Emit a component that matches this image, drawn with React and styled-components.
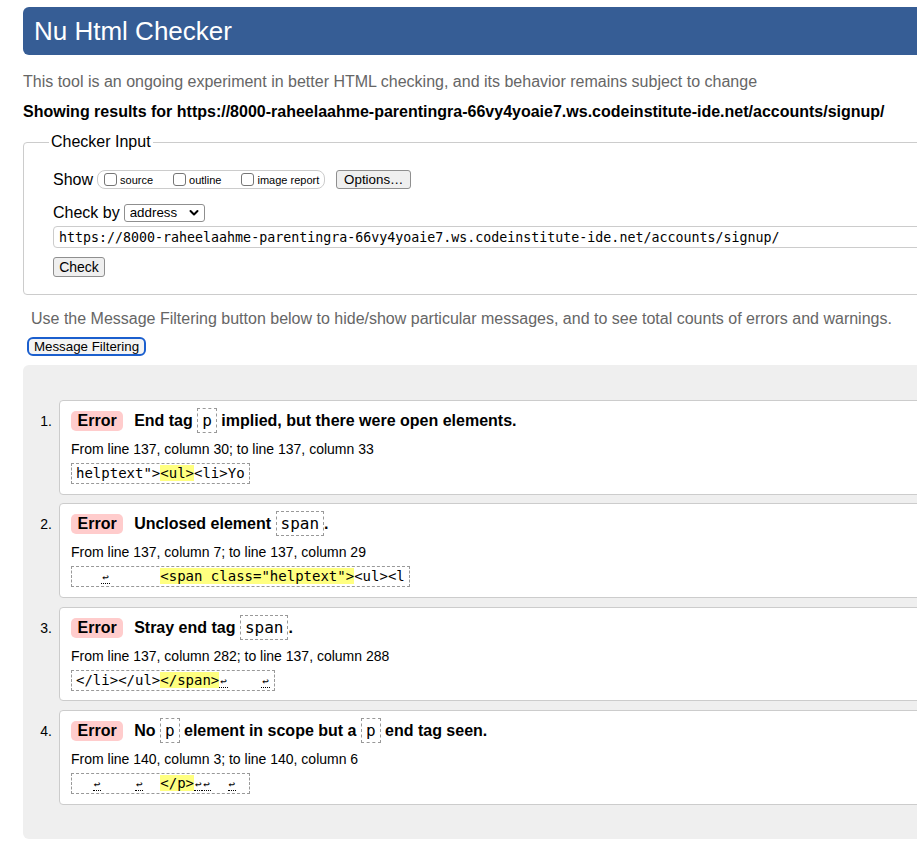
import React from 'react';
import styled, { createGlobalStyle } from 'styled-components';

const GlobalStyle = createGlobalStyle`
  html, body {
    margin: 0;
    padding: 0;
    overflow: hidden;
    background: #fff;
  }
  body {
    font-family: "Liberation Sans", Arial, sans-serif;
    color: #000;
  }
`;

const mono = `"DejaVu Sans Mono", "Liberation Mono", monospace`;

const Page = styled.div`
  width: 1000px;
  padding: 7px 0 0 23px;
`;

const Header = styled.h1`
  margin: 0;
  height: 48px;
  line-height: 48px;
  padding-left: 11px;
  background: #365d95;
  color: #fff;
  font-size: 26px;
  font-weight: normal;
  border-radius: 6px;
`;

const Intro = styled.p`
  margin: 18px 0 0;
  font-size: 16px;
  line-height: 18px;
  color: #666;
`;

const Results = styled.p`
  margin: 12px 0 0;
  font-size: 16px;
  line-height: 18px;
  font-weight: bold;
`;

const Fieldset = styled.fieldset`
  margin: 12px 0 0;
  padding: 19px 0 17px 29px;
  border: 1px solid #ccc;
  border-radius: 4px;
  min-width: 0;
`;

const Legend = styled.legend`
  padding: 0 2px;
  margin-left: -4px;
  font-size: 16px;
  line-height: 18px;
`;

const Row = styled.div`
  display: flex;
  align-items: center;
  gap: 4px;
  height: 19px;
  margin-top: ${p => p.$top || 0}px;
  font-size: 16px;
`;

const Toggles = styled.div`
  display: flex;
  align-items: center;
  gap: 20px;
  height: 19px;
  box-sizing: border-box;
  border: 1px solid #ccc;
  border-radius: 8px;
  padding: 0 5px 0 6px;
`;

const Toggle = styled.label`
  display: flex;
  align-items: center;
  gap: 3px;
  font-size: 11px;
`;

const Box = styled.input`
  appearance: none;
  margin: 0;
  width: 13px;
  height: 13px;
  border: 1px solid #767676;
  border-radius: 3px;
  background: #fff;
`;

const Button = styled.button`
  box-sizing: border-box;
  width: ${p => p.$width}px;
  height: 19px;
  margin-left: ${p => p.$left || 0}px;
  padding: 0;
  font-family: "Liberation Sans", Arial, sans-serif;
  font-size: 13.33px;
  color: #000;
  background: #efefef;
  border: 1px solid #8f8f8f;
  border-radius: 3px;
`;

const SelectWrap = styled.div`
  position: relative;
  display: flex;
`;

const Select = styled.select`
  appearance: none;
  box-sizing: border-box;
  width: 81px;
  height: 18px;
  padding: 0 0 0 5px;
  font-family: "Liberation Sans", Arial, sans-serif;
  font-size: 13.33px;
  color: #000;
  background: #fff;
  border: 1px solid #8f8f8f;
  border-radius: 3px;
`;

const Chevron = styled.svg`
  position: absolute;
  right: 6px;
  top: 4px;
  width: 10px;
  height: 10px;
  pointer-events: none;
`;

const UrlInput = styled.input`
  display: block;
  box-sizing: border-box;
  width: 100%;
  height: 22px;
  margin: 4px 0 0;
  padding: 0 0 0 5px;
  font-family: ${mono};
  font-size: 13.3px;
  color: #000;
  border: 1px solid #ccc;
  border-radius: 4px;
`;

const CheckButton = styled(Button)`
  display: block;
  width: 52px;
  height: 20px;
  margin-top: 9px;
  font-size: 14px;
`;

const FilterNote = styled.p`
  margin: 15px 0 0;
  padding-left: 8px;
  font-size: 16px;
  line-height: 18px;
  color: #666;
`;

const FilterButton = styled.button`
  display: block;
  box-sizing: border-box;
  width: 119px;
  height: 19px;
  margin: 9px 0 0 4px;
  padding: 0;
  font-family: "Liberation Sans", Arial, sans-serif;
  font-size: 13.33px;
  color: #000;
  background: #f4f4f4;
  border: 2px solid #1b5fce;
  border-radius: 6px;
`;

const ResultsArea = styled.ol`
  list-style: none;
  margin: 9px 0 0;
  padding: 35px 0 34px;
  background: #efefef;
  border-radius: 6px;
  display: flex;
  flex-direction: column;
  gap: 8.8px;
`;

const Item = styled.li`
  display: flex;
`;

const Num = styled.span`
  flex: 0 0 36px;
  box-sizing: border-box;
  padding: 12px 7px 0 0;
  text-align: right;
  font-size: 14px;
  line-height: 18px;
`;

const Message = styled.div`
  flex: 1;
  background: #fff;
  border: 1px solid #ccc;
  border-radius: 4px;
  padding: 7px 11px 9.6px;
`;

const Title = styled.p`
  margin: 0;
  font-size: 16px;
  line-height: 26px;
  font-weight: bold;
`;

const Badge = styled.span`
  display: inline-block;
  height: 20px;
  line-height: 20px;
  padding: 0 6.5px;
  margin-right: 11px;
  background: #fcc;
  border-radius: 5px;
`;

const Code = styled.code`
  display: inline-block;
  padding: 0 4px;
  line-height: 23px;
  font-family: ${mono};
  font-size: 16px;
  font-weight: normal;
  border: 1px dashed #999;
`;

const Location = styled.p`
  margin: 6px 0 0;
  font-size: 14px;
  line-height: 18px;
`;

const Extract = styled.code`
  display: inline-block;
  margin-top: 5px;
  padding: 0 4px;
  font-family: ${mono};
  font-size: 14px;
  line-height: 19px;
  white-space: pre;
  border: 1px dashed #999;
`;

const Mark = styled.mark`
  background: #ffff80;
  color: #000;
`;

const Ret = styled.span`
  display: inline-block;
  width: 8.43px;
  text-align: center;
  font-size: 11px;
  line-height: 11px;
  border-bottom: 1px dotted #000;
`;

const messages = [
  {
    title: <>End tag <Code>p</Code> implied, but there were open elements.</>,
    loc: 'From line 137, column 30; to line 137, column 33',
    extract: <>{'helptext">'}<Mark>{'<ul>'}</Mark>{'<li>Yo'}</>,
  },
  {
    title: <>Unclosed element <Code>span</Code>.</>,
    loc: 'From line 137, column 7; to line 137, column 29',
    extract: <>{'   '}<Ret>↩</Ret>{'      '}<Mark>{'<span class="helptext">'}</Mark>{'<ul><l'}</>,
  },
  {
    title: <>Stray end tag <Code>span</Code>.</>,
    loc: 'From line 137, column 282; to line 137, column 288',
    extract: <>{'</li></ul>'}<Mark>{'</span>'}</Mark><Ret>↩</Ret>{'    '}<Ret>↩</Ret></>,
  },
  {
    title: <>No <Code>p</Code> element in scope but a <Code>p</Code> end tag seen.</>,
    loc: 'From line 140, column 3; to line 140, column 6',
    extract: <>{'  '}<Ret>↩</Ret>{'    '}<Ret>↩</Ret>{'  '}<Mark>{'</p>'}</Mark><Ret>↩</Ret><Ret>↩</Ret>{'  '}<Ret>↩</Ret>{' '}</>,
  },
];

const App = () => {
  return (
    <>
      <GlobalStyle />
      <Page>
        <Header>Nu Html Checker</Header>
        <Intro>This tool is an ongoing experiment in better HTML checking, and its behavior remains subject to change</Intro>
        <Results>Showing results for https://8000-raheelaahme-parentingra-66vy4yoaie7.ws.codeinstitute-ide.net/accounts/signup/</Results>

        <Fieldset>
          <Legend>Checker Input</Legend>
          <Row>
            <span>Show</span>
            <Toggles>
              <Toggle><Box type="checkbox" />source</Toggle>
              <Toggle><Box type="checkbox" />outline</Toggle>
              <Toggle><Box type="checkbox" />image report</Toggle>
            </Toggles>
            <Button $width={75} $left={7}>Options…</Button>
          </Row>
          <Row $top={14}>
            <span>Check by</span>
            <SelectWrap>
              <Select defaultValue="address">
                <option value="address">address</option>
              </Select>
              <Chevron viewBox="0 0 10 10">
                <path d="M1.5 3 L5 6.5 L8.5 3" fill="none" stroke="#000" strokeWidth="2" strokeLinecap="round" strokeLinejoin="round" />
              </Chevron>
            </SelectWrap>
          </Row>
          <UrlInput defaultValue="https://8000-raheelaahme-parentingra-66vy4yoaie7.ws.codeinstitute-ide.net/accounts/signup/" />
          <CheckButton>Check</CheckButton>
        </Fieldset>

        <FilterNote>Use the Message Filtering button below to hide/show particular messages, and to see total counts of errors and warnings.</FilterNote>
        <FilterButton>Message Filtering</FilterButton>

        <ResultsArea>
          {messages.map((m, i) => (
            <Item key={i}>
              <Num>{i + 1}.</Num>
              <Message>
                <Title><Badge>Error</Badge>{m.title}</Title>
                <Location>{m.loc}</Location>
                <Extract>{m.extract}</Extract>
              </Message>
            </Item>
          ))}
        </ResultsArea>
      </Page>
    </>
  );
};

export default App;
